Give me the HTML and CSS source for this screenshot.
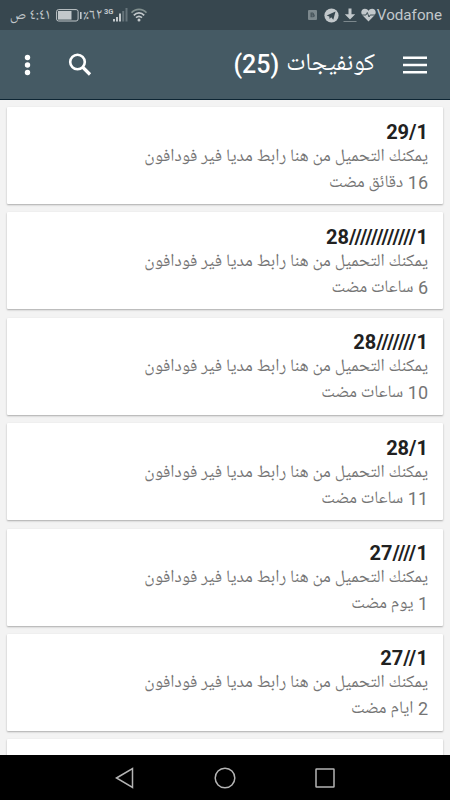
FILE: index.html
```html
<!DOCTYPE html>
<html lang="ar">
<head>
<meta charset="utf-8">
<title>كونفيجات</title>
<link rel="stylesheet" href="styles.css">
</head>
<body>
<div class="status">
  <div class="status-left">
    <span class="ar time" dir="rtl">٤:٤١ ص</span>
    <svg class="battery" width="26" height="13" viewBox="0 0 26 13"><rect x=".6" y=".6" width="21.5" height="11.4" rx="2" fill="none" stroke="#c2c8cb" stroke-width="1"/><rect x="2" y="2" width="13.5" height="8.6" fill="#c2c8cb"/><rect x="24" y="3" width="1.6" height="7" fill="#c2c8cb"/></svg>
    <span class="ar percent" dir="ltr">٪٦٢</span>
    <span class="net">3G</span>
    <svg class="signal" width="16" height="14" viewBox="0 0 16 14"><g fill="#c2c8cb"><rect x="0" y="11" width="2" height="2.5"/><rect x="3" y="9" width="2" height="4.500"/><rect x="6" y="5.500" width="2" height="8"/></g><g fill="#66747b"><rect x="9.200" y="3" width="2" height="10.500"/><rect x="12.500" y="0" width="2" height="13.500"/></g></svg>
    <svg class="wifi" width="16" height="14" viewBox="0 0 16 14"><g fill="none" stroke="#c2c8cb" stroke-width="1.700"><path d="M.5 4.800C4.500.2 11.500.2 15.500 4.800" stroke="#82908f"/><path d="M2.800 7.300c3-3.200 7.400-3.200 10.400 0"/><path d="M5 9.700c1.900-1.700 4.100-1.700 6 0"/></g><circle cx="8" cy="12" r="1.500" fill="#c2c8cb"/></svg>
  </div>
  <div class="status-right">
    <svg class="blog" width="9" height="10" viewBox="0 0 9 10"><rect width="9" height="10" rx="1" fill="#7c888d"/><path d="M2.500 2.500h2.200q1.300 0 1.300 1.700.8.200.8 1.300 0 1.800-1.600 1.800H2.500z" fill="#46545b"/><path d="M3.700 4h1M3.700 5.900h1.700" stroke="#7c888d" stroke-width=".8"/></svg>
    <svg class="telegram" width="15" height="15" viewBox="0 0 15 15"><circle cx="7.500" cy="7.500" r="7.100" fill="#c2c8cb"/><path d="M2.700 7.600 11.500 3.600 9.300 11.700 7.200 9.200 5.600 11 5.300 8.500z" fill="#37474f"/></svg>
    <svg class="download" width="14" height="15" viewBox="0 0 14 15"><path d="M5.500.5h3v5.800h3.700L7 11.600 1.800 6.300h3.700z" fill="#c2c8cb"/><path d="M.5 13.500h13" stroke="#7c888d"/></svg>
    <svg class="heart" width="15" height="14" viewBox="0 0 15 14"><path d="M7.500 13.500 1.400 7.300C-1 4.400.7.700 3.900.7c1.700 0 2.900.9 3.600 2C8.200 1.600 9.400.7 11.100.7c3.200 0 4.900 3.700 2.500 6.600z" fill="#c2c8cb"/><path d="M1 7h4l1.300-2.500L8 9l1.200-2H14" fill="none" stroke="#37474f" stroke-width=".9"/></svg>
    <span class="carrier">Vodafone</span>
  </div>
</div>
<header class="bar">
  <svg class="more" width="8" height="22" viewBox="0 0 8 22"><g fill="#fff"><circle cx="4.500" cy="3.500" r="2.700"/><circle cx="4.500" cy="11" r="2.700"/><circle cx="4.500" cy="18.500" r="2.700"/></g></svg>
  <svg class="search" width="24" height="24" viewBox="0 0 24 24"><circle cx="9.500" cy="9" r="7.300" fill="none" stroke="#fff" stroke-width="2.600"/><path d="M14.500 14 22 21.500" stroke="#fff" stroke-width="3.200"/></svg>
  <h1 class="title"><span class="count" lang="en" dir="ltr">(25)</span><span class="ar title-ar" dir="rtl">كونفيجات</span></h1>
  <svg class="menu" width="24" height="18" viewBox="0 0 24 18"><path d="M0 1.800h24M0 9h24M0 16.200h24" stroke="#fff" stroke-width="2.500"/></svg>
</header>
<main class="list">
  <article class="card"><h2>29/1</h2><p class="ar desc" dir="rtl">يمكنك التحميل من هنا رابط مديا فير فودافون</p><p class="ago" dir="rtl">16 <span class="ar">دقائق مضت</span></p></article>
  <article class="card"><h2>28<span class="slashes">////////////</span>1</h2><p class="ar desc" dir="rtl">يمكنك التحميل من هنا رابط مديا فير فودافون</p><p class="ago" dir="rtl">6 <span class="ar">ساعات مضت</span></p></article>
  <article class="card"><h2>28<span class="slashes">///////</span>1</h2><p class="ar desc" dir="rtl">يمكنك التحميل من هنا رابط مديا فير فودافون</p><p class="ago" dir="rtl">10 <span class="ar">ساعات مضت</span></p></article>
  <article class="card"><h2>28/1</h2><p class="ar desc" dir="rtl">يمكنك التحميل من هنا رابط مديا فير فودافون</p><p class="ago" dir="rtl">11 <span class="ar">ساعات مضت</span></p></article>
  <article class="card"><h2>27<span class="slashes">////</span>1</h2><p class="ar desc" dir="rtl">يمكنك التحميل من هنا رابط مديا فير فودافون</p><p class="ago" dir="rtl">1 <span class="ar">يوم مضت</span></p></article>
  <article class="card"><h2>27<span class="slashes">//</span>1</h2><p class="ar desc" dir="rtl">يمكنك التحميل من هنا رابط مديا فير فودافون</p><p class="ago" dir="rtl">2 <span class="ar">ايام مضت</span></p></article>
  <article class="card"></article>
</main>
<nav class="nav">
  <svg width="22" height="22" viewBox="0 0 22 22"><path d="M2.500 11 18.500 1.500v19z"/></svg>
  <svg width="22" height="22" viewBox="0 0 22 22"><circle cx="11" cy="11" r="9.800"/></svg>
  <svg width="22" height="22" viewBox="0 0 22 22"><rect x="2" y="2" width="18" height="18" rx=".5"/></svg>
</nav>
</body>
</html>
```
FILE: styles.css
```css
* { box-sizing: border-box; margin: 0; padding: 0; }
body {
  width: 450px; height: 800px; overflow: hidden;
  display: flex; flex-direction: column;
  background: #f3f3f3; font-family: Roboto, sans-serif;
}
svg { display: block; flex: none; }
.ar { font-family: "Noto Naskh Arabic UI", "Noto Sans Arabic UI", "Noto Sans Arabic", "DejaVu Sans", sans-serif; }
.status {
  height: 30px; flex: none; background: #37474f; color: #c2c8cb;
  display: flex; justify-content: space-between; align-items: center;
  padding: 0 8px 0 10px; white-space: nowrap;
}
.status-left, .status-right { display: flex; align-items: center; height: 30px; }
.time { font-size: 15px; width: 40px; }
.battery { margin-left: 6px; }
.percent { font-size: 15px; width: 19px; margin-left: 1px; }
.net { font-size: 7.500px; font-weight: 700; margin: -8px 0 0 2px; width: 9px; }
.signal { margin-right: 2px; }
.blog { margin-right: 7px; }
.telegram { margin-right: 4px; }
.download { margin-right: 4px; }
.carrier { font-size: 15.200px; margin-left: 1px; }
.bar {
  height: 70px; flex: none; background: #455a64; color: #fff;
  border-bottom: 1px solid #0d2533;
  display: flex; align-items: center; padding: 0 23px;
}
.search { margin-left: 37px; }
.title {
  margin-left: auto; white-space: nowrap;
  display: flex; align-items: baseline; gap: 7px; line-height: 40px;
}
.count { font-family: Roboto, sans-serif; font-size: 25px; font-weight: 500; }
.title-ar { font-weight: 400; font-size: 24.700px; }
.menu { margin-left: 28px; }
.list { flex: 1; min-height: 0; overflow: hidden; padding: 7px 7px 0; display: flex; flex-direction: column; gap: 8.400px; }
.card {
  height: 97px; flex: none; background: #fff; border-radius: 1px;
  padding: 11.500px 15px 0; box-shadow: 0 1px 2px rgba(0,0,0,.3);
}
.card h2 { font-size: 20px; line-height: 26px; text-align: right; color: #212121; font-weight: 700; }
.slashes { letter-spacing: .35px; }
.desc { font-size: 17.600px; line-height: 22px; margin-bottom: 2px; color: #757575; white-space: nowrap; }
.ago { font-size: 18px; line-height: 28px; color: #757575; white-space: nowrap; }
.ago .ar { font-size: 17.400px; line-height: 1; }
.nav {
  height: 45px; flex: none; background: #000;
  display: flex; justify-content: center; align-items: center; gap: 78px;
}
.nav svg { fill: none; stroke: #b4b4b4; stroke-width: 1.500; }
```
